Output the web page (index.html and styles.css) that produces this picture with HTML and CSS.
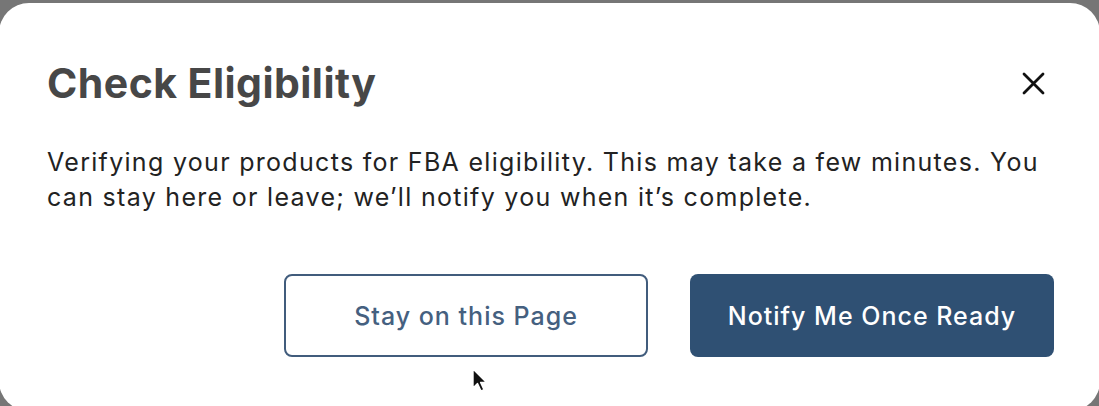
FILE: index.html
```html
<!DOCTYPE html>
<html lang="en">
<head>
    <meta charset="UTF-8">
    <meta name="viewport" content="width=device-width, initial-scale=1.0">
    <title>Check Eligibility</title>
    <link rel="stylesheet" href="styles.css">
</head>
<body>
    <div class="modal">
        <div class="modal-header">
            <h2>Check Eligibility</h2>
            <button class="close" aria-label="Close">
                <svg width="23" height="23" viewBox="0 0 23 23"><path d="M2 2L21 21M21 2L2 21" stroke="#111" stroke-width="2.8" stroke-linecap="round"/></svg>
            </button>
        </div>
        <p class="modal-text">Verifying your products for FBA eligibility. This may take a few minutes. You can stay here or leave; we’ll notify you when it’s complete.</p>
        <div class="modal-actions">
            <button class="btn btn-outline">Stay on this Page</button>
            <button class="btn btn-primary">Notify Me Once Ready</button>
            <!-- mouse pointer hovering under the first button -->
            <svg class="pointer" width="18" height="26" viewBox="0 0 18 26"><path d="M2 1L2 20L6.5 15.5L10 23L13 21.7L9.6 14.5L15.5 14.5Z" fill="#111" stroke="#fff" stroke-width="1.4" stroke-linejoin="round"/></svg>
        </div>
    </div>
</body>
</html>
```

FILE: styles.css
```css
body { margin: 0; background: #767676; font-family: Inter, "Noto Sans", sans-serif; overflow: hidden; }
.modal { margin: 3px 0 0 -1px; width: 1101px; height: 408px; box-sizing: border-box; padding: 55px 46px 0 48px; background: #fff; border-radius: 30px; }
.modal-header { display: flex; align-items: center; justify-content: space-between; height: 50px; }
.modal-header h2 { margin: 0; font-size: 41px; line-height: 50px; font-weight: 700; color: #474747; letter-spacing: 0.45px; }
.close { border: none; background: none; padding: 0; margin-right: 9px; cursor: pointer; display: flex; }
.modal-text { margin: 37px 0 0; font-size: 25px; line-height: 35px; color: #222; letter-spacing: 1.3px; }
.modal-actions { position: relative; display: flex; justify-content: flex-end; gap: 42px; margin-top: 59px; }
.btn { width: 364px; height: 83px; border-radius: 8px; font-family: inherit; font-size: 25px; font-weight: 500; letter-spacing: 1px; cursor: pointer; }
.btn-outline { background: #fff; border: 2.5px solid #415c7c; color: #45607f; }
.btn-primary { background: #2f5073; border: none; color: #fff; }
.pointer { position: absolute; left: 424px; top: 94px; }
```
